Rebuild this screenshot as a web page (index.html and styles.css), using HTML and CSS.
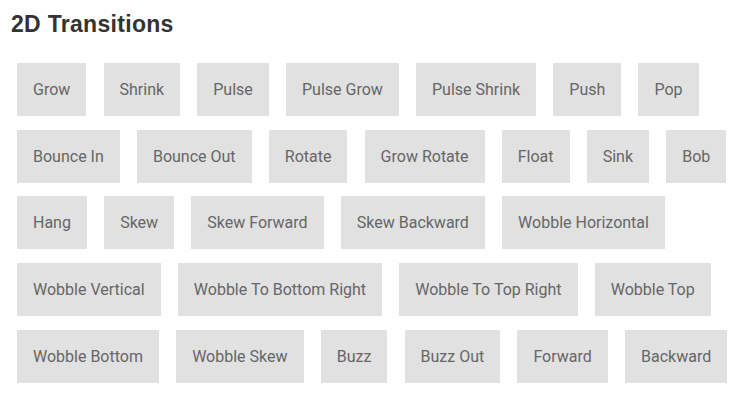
FILE: index.html
```html
<!DOCTYPE html>
<html>
<head>
<meta charset="utf-8">
<link rel="stylesheet" href="styles.css">
</head>
<body>
<div class="page">
  <h2 class="title">2D Transitions</h2>
  <div class="buttons">
    <a class="btn">Grow</a>
    <a class="btn">Shrink</a>
    <a class="btn">Pulse</a>
    <a class="btn">Pulse Grow</a>
    <a class="btn">Pulse Shrink</a>
    <a class="btn">Push</a>
    <a class="btn">Pop</a>
    <a class="btn">Bounce In</a>
    <a class="btn">Bounce Out</a>
    <a class="btn">Rotate</a>
    <a class="btn">Grow Rotate</a>
    <a class="btn">Float</a>
    <a class="btn">Sink</a>
    <a class="btn">Bob</a>
    <a class="btn">Hang</a>
    <a class="btn">Skew</a>
    <a class="btn">Skew Forward</a>
    <a class="btn">Skew Backward</a>
    <a class="btn">Wobble Horizontal</a>
    <a class="btn">Wobble Vertical</a>
    <a class="btn">Wobble To Bottom Right</a>
    <a class="btn">Wobble To Top Right</a>
    <a class="btn">Wobble Top</a>
    <a class="btn">Wobble Bottom</a>
    <a class="btn">Wobble Skew</a>
    <a class="btn">Buzz</a>
    <a class="btn">Buzz Out</a>
    <a class="btn">Forward</a>
    <a class="btn">Backward</a>
  </div>
</div>
</body>
</html>
```
FILE: styles.css
```css
html, body {
  margin: 0;
  padding: 0;
  background: #ffffff;
}
.page {
  padding: 11px 8px 0 11px;
}
.title {
  margin: 0 0 26px 0;
  font-family: "Liberation Sans", Arial, sans-serif;
  font-weight: bold;
  font-size: 23px;
  letter-spacing: 0.3px;
  line-height: 26px;
  color: #333333;
}
.buttons {
  display: flex;
  flex-wrap: wrap;
  column-gap: 17.2px;
  row-gap: 13.7px;
  padding-left: 6px;
}
.btn {
  display: block;
  padding: 17px 16px;
  background: #e1e1e1;
  color: #666666;
  font-family: Roboto, "Liberation Sans", sans-serif;
  font-size: 16px;
  line-height: 19px;
  text-decoration: none;
  white-space: nowrap;
}
```
